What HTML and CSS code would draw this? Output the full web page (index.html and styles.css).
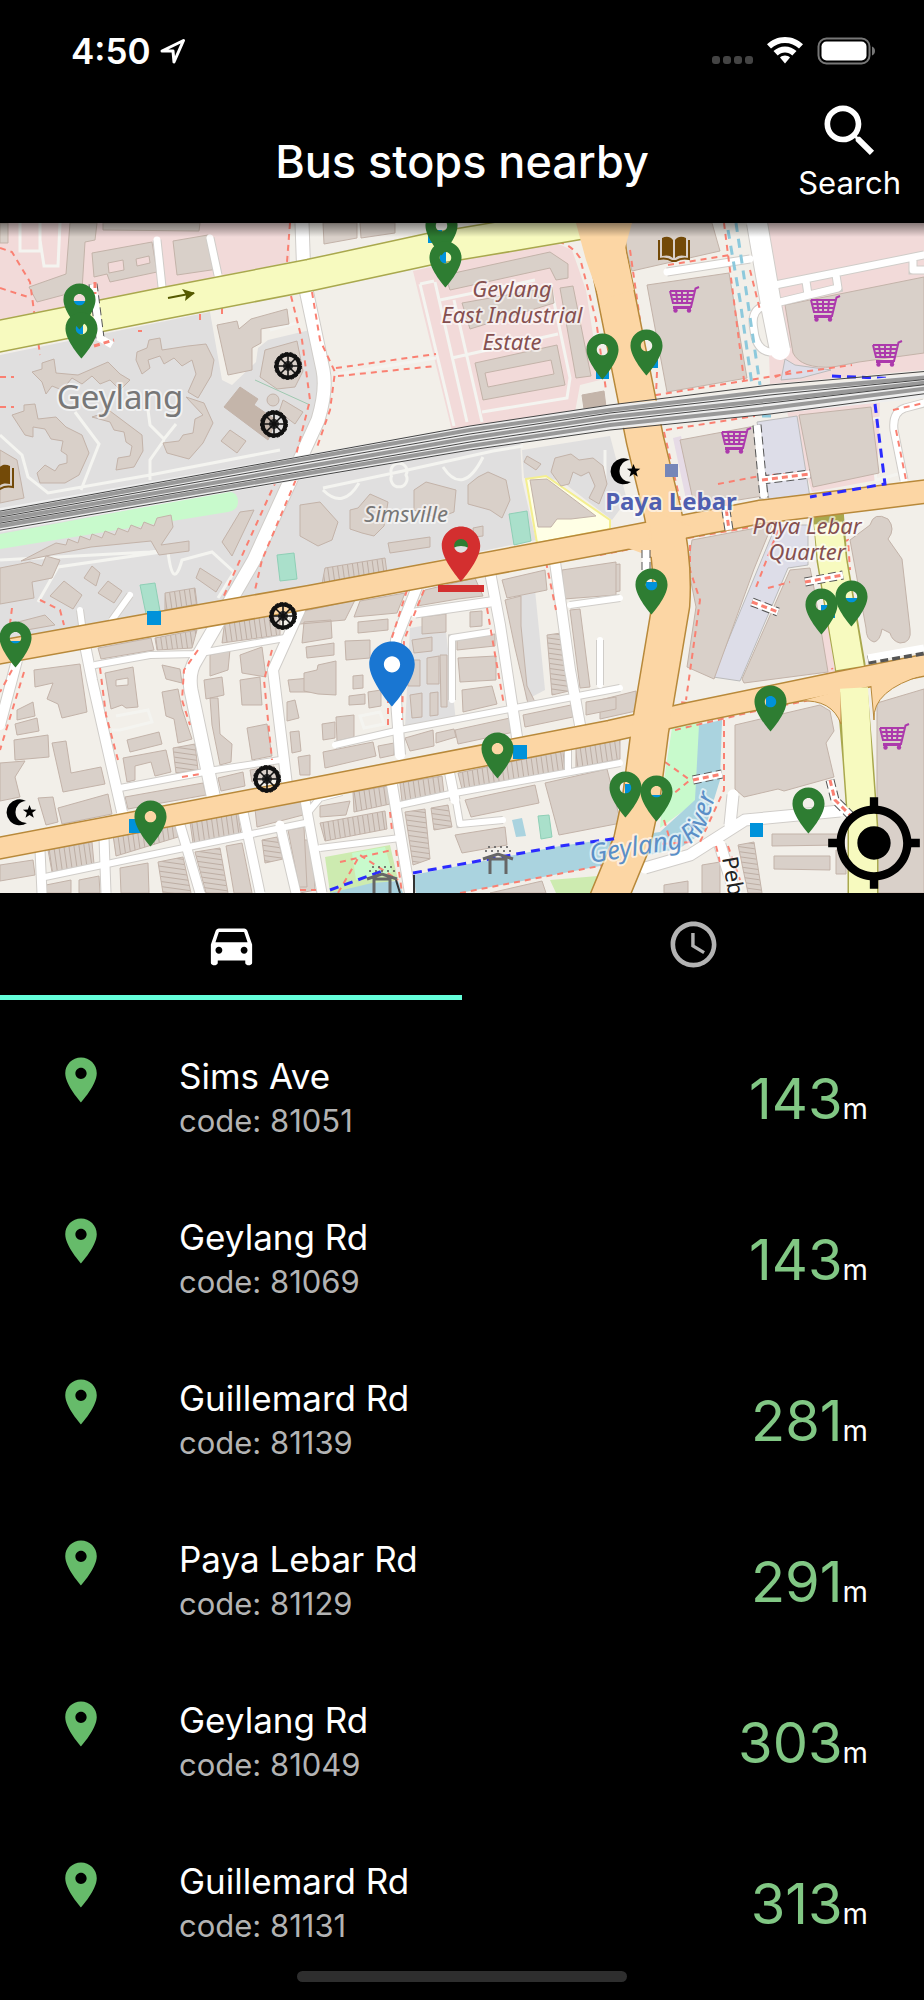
FILE: index.html
```html
<!DOCTYPE html>
<html lang="en">

<head>
    <meta charset="utf-8">
    <meta name="viewport" content="width=device-width, initial-scale=1">
    <title>Bus stops nearby</title>
    <link rel="stylesheet" href="styles.css">
</head>

<body>
<svg class="defs" width="0" height="0" aria-hidden="true">
    <symbol id="place" viewBox="0 0 24 24">
        <path d="M12 2C8.13 2 5 5.13 5 9c0 5.25 7 13 7 13s7-7.75 7-13c0-3.87-3.13-7-7-7zm0 9.5c-1.38 0-2.5-1.12-2.5-2.5s1.12-2.5 2.5-2.5 2.5 1.12 2.5 2.5-1.12 2.5-2.5 2.5z"/>
    </symbol>
</svg>

<header class="header">
    <div class="status">
        <span class="time">4:50</span>
        <svg class="arrow" viewBox="0 0 26 26"><path d="M2 13 23.5 2.5 14 24 13 13z"/></svg>
        <span class="dots"><i></i><i></i><i></i><i></i></span>
        <svg class="wifi" viewBox="0 0 36 27">
            <path d="M18 0C11 0 4.8 2.8 0 7.3l4 4.2C7.7 8 12.6 6 18 6s10.3 2 14 5.500l4-4.2C31.2 2.8 25 0 18 0z"/>
            <path d="M18 9.5c-4.4 0-8.4 1.7-11.5 4.6l4.2 4.3c2-1.8 4.5-2.9 7.3-2.9s5.3 1.1 7.3 2.9l4.2-4.3c-3.1-2.9-7.1-4.6-11.500-4.6z"/>
            <path d="M18 18.5c-1.9 0-3.6.7-5 1.9l5 6 5-6c-1.4-1.2-3.1-1.9-5-1.9z"/>
        </svg>
        <svg class="battery" viewBox="0 0 59 28">
            <rect x="1.5" y="1.5" width="51" height="25" rx="8" fill="none" stroke="#777" stroke-width="2"/>
            <rect x="4.5" y="4.5" width="45" height="19" rx="5" fill="#fff"/>
            <path d="M55 9.5c4 1 4 8 0 9z" fill="#777"/>
        </svg>
    </div>
    <div class="bar">
        <h1 class="title">Bus stops nearby</h1>
        <button class="search" type="button">
            <svg viewBox="0 0 24 24"><path d="M15.5 14h-.79l-.28-.27C15.41 12.59 16 11.11 16 9.5 16 5.91 13.09 3 9.5 3S3 5.91 3 9.5 5.91 16 9.5 16c1.61 0 3.09-.59 4.23-1.57l.27.28v.79l5 4.99L20.49 19l-4.99-5zm-6 0C7.01 14 5 11.99 5 9.5S7.01 5 9.5 5 14 7.01 14 9.5 11.99 14 9.5 14z"/></svg>
            <span>Search</span>
        </button>
    </div>
</header>

<section class="map">
    <svg class="tiles" viewBox="0 223 924 670" role="img" aria-label="Map of bus stops in Geylang">
        <defs>
            <pattern id="terrace" width="5" height="5" patternUnits="userSpaceOnUse" patternTransform="rotate(-8)">
                <rect width="5" height="5" fill="#d9d0c9"/><path d="M0 0V5" stroke="#bdaea4" stroke-width="2"/>
            </pattern>
            <pattern id="terrace-h" width="5" height="5" patternUnits="userSpaceOnUse" patternTransform="rotate(8)">
                <rect width="5" height="5" fill="#d9d0c9"/><path d="M0 0H5" stroke="#bdaea4" stroke-width="2"/>
            </pattern>
            <linearGradient id="shade" x1="0" y1="0" x2="0" y2="1">
                <stop offset="0" stop-color="#000" stop-opacity=".45"/><stop offset="1" stop-color="#000" stop-opacity="0"/>
            </linearGradient>
            <symbol id="cart" viewBox="0 0 31 27">
                <path d="M30 1l-3.5 1.5L22 21H5M1 5h24M1 5l3 12h19M3 9h21M4 13h19M7 5l1.5 12M13 5v12M19 5l-1 12" fill="none" stroke="#ac39ac" stroke-width="2"/>
                <path d="M4 20h18v3H4z" fill="#ac39ac"/>
                <circle cx="6.5" cy="24.5" r="2.2" fill="#ac39ac"/><circle cx="20" cy="24.5" r="2.2" fill="#ac39ac"/>
            </symbol>
            <symbol id="book" viewBox="0 0 32 27">
                <path d="M4 2c4-2 8-2 11 2v18c-3-3-7-3-11-2zM28 2c-4-2-8-2-11 2v18c3-3 7-3 11-2z" fill="#734a08"/>
                <path d="M1 4v19c5-1 10 0 13 2h4c3-2 8-3 13-2V4" fill="none" stroke="#734a08" stroke-width="2"/>
            </symbol>
            <symbol id="wheel" viewBox="0 0 30 30">
                <circle cx="15" cy="15" r="11.5" fill="none" stroke="#111" stroke-width="4"/>
                <circle cx="15" cy="15" r="13.500" fill="none" stroke="#111" stroke-width="1" stroke-dasharray="3 2"/>
                <circle cx="15" cy="15" r="5" fill="#333"/>
                <path d="M15 3v24M3 15h24M6.5 6.5l17 17M23.5 6.5l-17 17" stroke="#111" stroke-width="1.6"/>
            </symbol>
            <symbol id="moon" viewBox="0 0 32 28">
                <path d="M20 3a13 13 0 1 0 1 22a10 10 0 1 1-1-22z"/>
                <path d="M23.5 7l1.8 4.6 5 .2-4 3 1.5 4.9-4.3-2.8-4 2.8 1.4-4.9-4-3 4.9-.2z"/>
            </symbol>
            <symbol id="shelter" viewBox="0 0 32 28">
                <path d="M1 13 16 8l15 5M8 11v17M24 11v17M8 13h16" fill="none" stroke="#666" stroke-width="3"/>
                <path d="M3 5h26M6 1h20" stroke="#555" stroke-width="1.5" stroke-dasharray="2 4"/>
            </symbol>
            <path id="river-line" d="M591 863 682 848Q702 840 708 820L732 745"/>
        </defs>

        <!-- land use -->
        <rect x="0" y="223" width="924" height="670" fill="#f2efe9"/>
        <g class="residential">
            <path d="M0 355 210 312 222 380 232 385 256 362 258 348 268 340 310 330 325 380 300 462 0 518z"/>
            <path d="M0 525 300 470 520 436 522 480 536 540 380 572 300 590 0 640z"/>
            <path d="M522 450 610 436 627 500 612 520 560 480 524 478z"/>
            <path d="M410 628 445 622 456 722 405 728z"/>
            <path d="M515 596 535 590 545 690 526 700z"/>
        </g>
        <g class="commercial">
            <path d="M0 223H290V262L0 320z"/>
            <path d="M413 271 550 240 572 250 586 290 600 380 580 385 575 412 452 431z"/>
            <path d="M765 223H924V370L770 384z"/>
            <path d="M787 412 880 402 877 480 812 492z"/>
            <path d="M820 620 838 620 836 672 826 674z"/>
        </g>
        <path class="grass" d="M0 534 225 492Q238 490 238 502 238 510 228 512L0 549z"/>
        <path class="grass" d="M672 728 700 722 698 800 660 828 664 780z"/>
        <path fill="#cdebb0" d="M325 857 390 845 398 880 330 893zM550 880 610 875 600 893H556z"/>
        <path class="grass" d="M352 853 385 847 392 872 356 880z"/>
        <path class="water" d="M413 875 560 846 660 832 695 800 699 725 722 720 720 780 704 832 680 848 600 866 460 893H416zM330 893 372 883 398 881 403 893zM512 820l10-2 4 18-10 1z"/>
        <path class="pitch" d="M140 585l15-2 5 28-14 3zM277 555l17-2 3 26-17 2zM509 514l18-3 4 30-17 4zM538 816l11-1 3 22-11 2z"/>
        <path fill="#dddde8" stroke="#bbb" d="M757 422l40-6 14 88-40 8zM785 359l10 6 36 5-30 8-20 2zM776 525h32v26l0 14-20 3-48 113-27-4z"/>
        <path fill="#e6dbe6" d="M673 438l8-2 14 66-8 2z"/>
        <path fill="#ffffe5" stroke="#f4ef90" stroke-width="2" d="M526 479l20-3 64 44v9l-73 14z"/>

        <!-- service lanes -->
        <g class="lane">
            <path d="M20 223v28h20V223M40 240l4 26h14L60 223"/>
            <path d="M420 284l34 142M435 282l32 140M420 284l14-3M454 300l28 122M440 300l95-20M452 358l106-24M482 412l85-14 3-20-20-95"/>
            <path d="M338 374 436 358M75 412l24 32-18 46M148 410l2 15 14 14 12-15M150 480v-20l14-20M0 435l22 20 6 22 20 16 102-18 130-25"/>
            <path d="M323 488l80-17 90-20 30-5M323 490q20 20 36-7M443 467q20 30 40-10M392 475a8 8 0 1 0 14 0 8 8 0 1 0-14 0"/>
            <path d="M0 560 150 552 186 548M38 602l20-35 110-16M168 552q5 40 14 8l30-8 22 20-16 26M116 716l32-6 4 12-32 8-8 0"/>
            <path d="M270 330l30-8M605 450v35l-6 14M870 418l6 62 22-6M868 420l12-2M360 716l20-4 4 12-20 4z"/>
        </g>
        <path fill="none" stroke="#9ec9b0" d="M255 380 310 405"/>

        <!-- buildings -->
        <g class="building">
            <path d="M70 223H97L95 240 85 242 82 290 37 302 29 287 66 274zM173 241l35-6 10 34-41 6zM103 223h97l-1 8-96-1zM0 223h8v20H0z"/>
            <path fill-rule="evenodd" d="M92 253l60-11 5 30-47 10-3-8-13 3zM108 263l15-3 1 10-15 3zM136 259l13-3 1 7-13 3z"/>
            <path d="M32 372l10-3 0-6 12-4 2 14 22 2 30-13 12 12 10 6-10 10-10-10-10 4-8-8-10 8-10-6-10 12-10-4-6 8-4-12z"/>
            <path d="M137 352l10-4 2-8 11-2 2 12 26-4 18-2 8 16-3 16-13 22-10-6 8-18-4-14-10 6-8-8-10 6-4-8-12 4 2 8-8 6-6-14z"/>
            <path d="M12 415l12-4 0-6 11-1 3 15 18-2 10 10 16 8 7 18-10 22-14 8-25 0-3-10 8-8 10 6 4-6 8-2 0-8-6-4 2-10-12-2-6-10-12-2 0 10-8-2z"/>
            <path d="M92 417l18-6 32 24 1 16-9 16-18 3 2-12 12-2 2-10-6-4-2-10-10-2-4-8zM186 397l18 6 9 20-10 20-14 16-22-6-4-10 16-2 4-6 10-2 2-14 8-4z"/>
            <path d="M217 325l20-4 2 8 12-10 36-10 2 15-28 5v14l-9 5v22l-24 5zM265 350l32-9 6 30-8 16-18 2-17-12zM230 430l16 11-9 12-16-12zM283 400l20 12-8 12-16-12zM0 450l17 10 7 38-24 5zM267 400a6 6 0 1 0 12 0 6 6 0 1 0-12 0"/>
            <path d="M48 547l8-4 10 2 2-6 10 4 2-7 10 4 2-6 10 4 3-7 10 4 3-7 10 4 3-7 10 4 3-7 10 4 3-8 14-3 2 12-12 18 28-4v10l-30 4-8-14-60 6-70 14zM240 512l14-2-22 46-10-14z"/>
            <path d="M0 568l30-6 12 4 4-10 14 4-8 18-20 4 2 16-34 6zM50 596l14-15 18 14-9 14zM84 578l8-12 8 7-4 13zM98 593l10-12 14 10-8 12zM18 622l27-7 10 10-34 6zM200 568l22 14-6 10-20-14z"/>
            <path d="M300 505l20-3 18 20-6 18-14 6-18-10zM350 510l8-2 12-14 18 8-4 24-10 10-12-3-12-4zM414 490l12-8 30 8-2 22-16 6-24-8zM468 485l10-8 10-5 18 8 4 20-8 18-12-8-22-6zM388 543l42-6v10l-40 6zM473 528l10-2v10l-9 1zM555 458l16-4 8 6 14-2 10 8 4 18-8 20-10-6 6-12-6-14-8 4-8-4-4 12-8 2-10-14zM527 456l14 8-5 6-12-8zM530 480l17-1 49 37-25 3-14 0-6 8-13 0z"/>
            <path d="M323 223h34v15l-33 6zM360 223h35v10l-34 5zM445 275l105-23 18 12v14l-12 2-6-12-100 22zM462 303l90-16 2 16-84 26zM560 288l13-2 18 90-15 2z"/>
            <path fill-rule="evenodd" d="M475 363l82-18 8 40-82 15zM485 373l66-13 3 14-66 13zM105 673l28-6 5 40-12 1-4-3-11 4zM116 680l12-2v7l-12 1z"/>
            <path d="M630 223h82l8 28-88 20-7-26zM647 285l82-12 18 105-80 14zM785 305l139-28v76l-65 9-26 5q-32 2-40-14zM680 440l75-14 8 70-62 10-8-6zM799 415l72-8 8 66-66 14z"/>
            <path d="M692 540l80-15-18 44-40 110-27-12 9-60-8-40zM790 570l20-2 4 20 14 84-84 11-2-4zM850 540l20-15q4-14 18-6 8 10 0 20l14 20 8 70q2 14-10 14-8-2-10-10l-8-4q-2 12-8 13-8-2-8-14z"/>
            <path d="M735 725l85-20 10 6 4 20-8 12 8 34-50 14-6-2-34 8-9-8zM877 703l47-14V893h-47z"/>
            <path d="M600 566l20-2v27l-20 3zM600 700l36-9 0 20-36 8zM772 834h68v11l-68 1zM774 856h56v14l-56-1zM836 850h10v24h-10zM702 865l18-3v31h-18zM664 885l24-4v12h-24zM545 783l62-14 14 54-62 12z"/>
            <path d="M98 648l53-10 3 12-53 9zM34 670l46-6 7 48-25 6-4-14-11-5 6-16-18 4zM17 710l16-8 2 14-18 4zM15 724l22-6 2 13-22 4zM14 740l34-5 1 22-34 3zM52 743l14-2 5 32 30-6 4 17-42 8zM0 763l25-2-10 16 5 20-20 4zM38 798l15-1 5 25-12 3zM58 808l50-14 4 20-50 10z"/>
            <path d="M127 740l32-8 3 12-32 8zM123 758l43-8 5 22-16 4-4-14-16 4v14l-8 2zM125 797l78-14 3 12-78 14zM162 665l18 4 2 14-16-4zM162 692l16-3 4 20 10 30-14 4-4-24-8-3z"/>
            <path d="M210 655l20-5-2 20-18 6zM204 680l18-3 2 18-18 4zM210 698l8 0 2 36 12 10-1 18-11 3-8-40zM240 655l22-8 4 30-24-4zM240 680l20-3 2 28-20 0zM247 728l20-4 5 32-20 4zM218 778l25-6 2 14-24 5zM250 770l24-4 2 12-24 4zM288 680l22-2v14l-20 0zM287 702l8-2 4 18-12 3zM290 732l9-1 2 20-9 2zM298 757l12-2v20h-10z"/>
            <path d="M300 612l55-12-10 20-45 4zM360 601l45-8-8 20-43 4zM358 622l30-3v11l-30 3zM304 622l27-2 1 18-30 5zM306 647l28-4v12l-27 3zM345 641l25-1v18l-24 2zM318 665l18-4v34l-18-1-14-3v-18l13-3zM353 676l10-1v13l-10 1zM349 696l16-2v10l-16 1zM368 692l13-2v16l-12 2zM336 717l18-2v22l-17 4zM322 724l13-2v16l-12 2z"/>
            <path d="M323 752l50-10 3 14-51 12zM378 746l16-3v12l-14 3zM405 738l28-8 1 16-24 5zM436 733l18-4 2 8-20 6zM455 730l55-12 4 14-56 12zM412 640l20-3v14l-18 2zM427 658l12-2v28h-12zM410 695l12-2v24l-10 1zM430 693l8-1v23l-8 1zM440 655h7v52h-6zM408 660h12v26h-12zM422 617l24-3v18l-24 2zM470 612l12-1v15l-12 1zM457 640l38-6v12l-38 4zM458 658l38-2v24l-36 2zM462 690l30-4 5 18-34 8zM425 590l50-12 8 18-25 3-41 7z"/>
            <path d="M502 580l43-10 2 20-40 8zM505 600l16-4v30l6 60 10 20-8 2-14-60zM562 570l54-8v33l-52 4zM570 610l10-1 10 78-10 1zM523 715l48-10 2 12-48 10zM586 702l30-5v12l-30 6zM465 800l70-15 4 18-68 14zM320 806l30-5-4 14-26 2zM455 835l50-8 2 18-45 8zM490 893l52-12 4 12zM300 840l12 0 3 50-15 3z"/>
            <path d="M255 809l46-10 2 16-46 12zM0 865l33-5 2 15-35 6zM46 885l25-5v13H46zM79 880l20-4 1 17H79zM120 868l28-5 1 30h-28zM226 846l16-3 10 50h-18zM288 830l16-3 3 60h-8z"/>
        </g>
        <g class="building dark">
            <path d="M240 387l18 12-4 6 22 15-8 20-44-33zM582 395l22-4 2 16-22 2z"/>
        </g>
        <g class="hatched">
            <path d="M165 593l30-5 2 16-32 6zM155 638l42-8-5 18-35 2zM225 620l55-10v25l-58 8zM48 850l44-8 2 22-42 8zM113 835l64-12 1 14-62 19zM190 822l48-9 3 22-48 8zM325 568l60-10 2 15-65 11zM458 773l105-22 2 20-103 18zM576 748l44-9v20l-44 9zM400 783l42-7 2 18-42 7zM353 792l35-6 2 18-36 8zM320 823l65-12 2 18-62 12z"/>
        </g>
        <g class="hatched across">
            <path d="M173 748l22-4 3 26-22 3zM158 862l25-5 8 36h-28zM195 852l25-4 8 45h-22zM262 840l15-3 6 22-18 4zM405 812l20-3 5 50-17 6zM431 808l17-3 4 22-18 3zM547 635l14-2 8 58-17 4zM738 845l16-3 8 51h-14z"/>
        </g>

        <!-- side streets: casing first, then the fill -->
        <g class="street-case">
            <path stroke-width="15" d="M302 223 304 280 323 370Q327 390 318 420L254 560 196 660Q188 672 191 690L213 795"/>
            <path stroke-width="12" d="M300 610 273 670 287 785M85 645 92 680 122 812M17 660 0 725M417 587 396 640V700L400 755M392 785 410 893M490 572 500 625 517 737M555 562 570 670 580 725"/>
            <path stroke-width="11" d="M40 850 42 893M104 838 106 893M180 825 200 893M243 812 260 893M280 825 296 893M305 800 322 893M449 770 455 800M415 613 490 602"/>
            <path stroke-width="8" d="M95 665 150 655 195 654 285 638M45 877 150 855 310 822M120 788 215 770 280 760M335 745 400 730 620 688M400 805 455 793 620 763M320 848 400 838M452 700 452 638 490 632M455 795 460 824 503 820M568 772V750M570 605 620 598M600 640V685M80 610 84 640M112 620 130 595M310 810 320 798 342 792"/>
            <path stroke-width="13" d="M645 868 690 855 745 820 840 811M720 845 735 893M733 795 730 825"/>
            <path stroke-width="22" d="M757 223 772 310 780 350"/>
            <path stroke-width="9" d="M667 272 750 259M775 285 924 255M780 302 838 288 836 275M806 281 808 295M904 480 894 430Q892 412 905 408L924 403M157 240 162 287M210 238 218 275M764 306Q750 310 754 330 756 350 770 352M913 260V270H924"/>
        </g>
        <g class="street">
            <path stroke-width="13" d="M302 223 304 280 323 370Q327 390 318 420L254 560 196 660Q188 672 191 690L213 795"/>
            <path stroke-width="10" d="M300 610 273 670 287 785M85 645 92 680 122 812M17 660 0 725M417 587 396 640V700L400 755M392 785 410 893M490 572 500 625 517 737M555 562 570 670 580 725"/>
            <path stroke-width="9" d="M40 850 42 893M104 838 106 893M180 825 200 893M243 812 260 893M280 825 296 893M305 800 322 893M449 770 455 800M415 613 490 602"/>
            <path stroke-width="6" d="M95 665 150 655 195 654 285 638M45 877 150 855 310 822M120 788 215 770 280 760M335 745 400 730 620 688M400 805 455 793 620 763M320 848 400 838M452 700 452 638 490 632M455 795 460 824 503 820M568 772V750M570 605 620 598M600 640V685M80 610 84 640M112 620 130 595M310 810 320 798 342 792"/>
            <path stroke-width="11" d="M645 868 690 855 745 820 840 811M720 845 735 893M733 795 730 825"/>
            <path stroke-width="20" d="M757 223 772 310 780 350"/>
            <path stroke-width="7" d="M667 272 750 259M775 285 924 255M780 302 838 288 836 275M806 281 808 295M904 480 894 430Q892 412 905 408L924 403M157 240 162 287M210 238 218 275M764 306Q750 310 754 330 756 350 770 352M913 260V270H924"/>
        </g>
        <path fill="none" stroke="#8dc9dc" stroke-width="3" stroke-dasharray="9 7" d="M736 223 746 290 760 385M728 230 740 300 752 385M762 416h12"/>

        <!-- footways -->
        <g class="foot">
            <path d="M0 248 12 252 30 282 40 355M0 288 28 297M290 223 287 262M291 296 302 340 310 400 296 455M312 292 320 340 335 372 330 410 316 450M336 368 436 354M338 376 436 366M395 263 550 240Q570 242 580 258L596 320 606 390"/>
            <path d="M281 470 240 560 222 600M300 470 262 560 255 590M198 650 184 670 182 700 190 725M272 650 264 680 268 720 272 760M100 668 106 715 118 760M25 658 64 650M12 670 0 692M24 672 0 750M40 600 60 610 64 625M12 608 8 640M138 331h4M200 314v6M222 308v6M0 377h14M0 407h14"/>
            <path d="M407 590 388 650 388 725M424 590 404 640 402 720M487 608 496 660 504 705M546 562 556 610M606 553 700 535M390 812 392 830M182 777 200 774M250 809 306 798"/>
            <path d="M724 223 744 380M630 250 640 320M657 372 656 395 780 375 852 365M668 265 730 255M750 270 760 310M718 484 760 476 810 472M664 432 680 500M666 430 755 416M690 545 690 570 700 600 686 700M778 530 755 590M720 706 678 702M688 538 780 522M675 730 760 710 820 698M724 720 724 790 700 842M665 762 690 780 672 795M768 588 790 582M832 545 848 540 850 570M840 690 832 668M893 410 924 403M896 430 906 480M840 508 924 498M600 555 650 545M775 377l20-8M664 820 670 840M716 846 720 862M728 846 740 880"/>
            <path d="M460 893 620 862M338 893 360 855 398 880M340 862 392 850M300 890H316M396 850 402 893M690 842 660 844"/>
        </g>

        <!-- main roads -->
        <g class="road-case yellow-case">
            <path stroke-width="33" d="M-5 337 155 305 310 275 430 249 520 234 590 222"/>
            <path stroke-width="31" d="M828 510 832 560 850 665 858 760 863 830V893"/>
        </g>
        <g class="road-case orange-case">
            <path stroke-width="25" d="M-5 653 150 625 310 597 460 569 610 541 760 512 930 491"/>
            <path stroke-width="23" d="M-5 849 310 789 610 731 690 713 840 682 930 664"/>
            <path stroke-width="39" d="M603 210 608 255 626 345 645 440 662 510Q674 560 671 605L650 730 641 800 632 842 606 905"/>
        </g>
        <path class="corner" d="M800 701Q832 699 841 724V690zM874 720Q872 690 924 675V664L870 676z"/>
        <g class="road yellow">
            <path stroke-width="30" d="M-5 337 155 305 310 275 430 249 520 234 590 222"/>
        </g>
        <g class="road orange">
            <path stroke-width="22" d="M-5 653 150 625 310 597 460 569 610 541 760 512 930 491"/>
            <path stroke-width="20" d="M-5 849 310 789 610 731 690 713 840 682 930 664"/>
            <path stroke-width="36" d="M603 210 608 255 626 345 645 440 662 510Q674 560 671 605L650 730 641 800 632 842 606 905"/>
        </g>
        <path fill="#fcd6a4" d="M576 223H632L625 248 634 290 600 300 586 260zM620 545 652 540 648 508 690 526 692 532 660 560z"/>
        <path class="road yellow" stroke-width="28" d="M828 523 832 560 850 668M854 688 858 760 863 830V893"/>
        <path fill="none" stroke="#555900" stroke-width="2" d="M168 298 194 293"/>
        <path fill="#555900" d="M182 289l13 4-10 8 1-6z"/>
        <path fill="none" stroke="#555" stroke-width="9" stroke-dasharray="8 4" d="M93 284 100 338M752 602 778 612M805 582 843 575M693 780 722 774M724 498 729 530M830 780 835 800 855 820M646 550V570M757 425 764 498M762 480 810 474M868 660 924 651"/>
        <path fill="none" stroke="#fff" stroke-width="7" d="M93 284 100 338 112 345M752 602 778 612M805 582 843 575M693 780 722 774M724 498 729 530M830 780 835 800 855 820M646 550V570M757 425 764 498M762 480 810 474M868 658 924 648"/>
        <path fill="none" stroke="#fa8072" stroke-width="3" stroke-dasharray="6 4" d="M95 282v12M94 346 114 340M752 602 778 612M805 582 843 575M693 780 722 774M725 500 729 530M830 780 835 800 855 820M762 480 810 474"/>
        <path fill="none" stroke="#2b2bff" stroke-width="3" stroke-dasharray="9 6" d="M413 873 560 846 620 838M875 404 885 484 810 497M330 890 385 870M832 376 924 380"/>
        <path fill="none" stroke="#333" stroke-width="2" d="M414 875v18M396 880l4 13"/>

        <!-- railway -->
        <g class="rail">
            <path class="rail-bed" d="M-5 521 310 466 470 438 610 417 770 402 930 385"/>
            <path class="rail-line" d="M-5 515 310 458 470 430 610 410 770 391 930 377"/>
            <path class="rail-line" d="M-5 521 310 466 470 438 610 417 770 400 930 382"/>
            <path class="rail-line" d="M-5 527 310 473 470 446 610 425 770 408 930 388"/>
            <path class="rail-dark" d="M-5 512 310 455 470 426 610 405 770 385 930 371M-5 518 310 462 470 434 610 413 770 395 930 379M-5 524 310 470 470 442 610 421 770 403 930 384M-5 531 310 477 470 450 610 430 770 414 930 393"/>
        </g>

        <!-- points of interest -->
        <use href="#book" x="658" y="236" width="32" height="27"/>
        <use href="#book" x="-18" y="464" width="32" height="27"/>
        <use href="#cart" x="669" y="286" width="31" height="27"/>
        <use href="#cart" x="810" y="295" width="31" height="27"/>
        <use href="#cart" x="872" y="340" width="31" height="27"/>
        <use href="#cart" x="721" y="427" width="31" height="27"/>
        <use href="#cart" x="879" y="723" width="31" height="27"/>
        <use href="#wheel" x="273" y="351" width="30" height="30"/>
        <use href="#wheel" x="259" y="409" width="30" height="30"/>
        <use href="#wheel" x="268" y="601" width="30" height="30"/>
        <use href="#wheel" x="252" y="764" width="30" height="30"/>
        <use href="#moon" x="610" y="457" width="32" height="28"/>
        <use href="#moon" x="6" y="798" width="32" height="28"/>
        <use href="#shelter" x="482" y="846" width="32" height="28"/>
        <use href="#shelter" x="366" y="866" width="32" height="28"/>
        <rect x="665" y="464" width="13" height="13" fill="#7586b8"/>
        <path fill="#0092da" d="M147 611h14v14h-14zM129 819h14v14h-14zM513 745h14v14h-14zM750 823h13v14h-13zM428 230h14v13h-14zM596 366h13v13h-13zM645 355h13v13h-13zM73 301h13v14H73zM75 324h8v10h-8zM440 250h6v13h-6zM8 641h14v14H8zM646 582h12v13h-12zM821 605h14v13h-14zM844 598h14v13h-14zM766 696h11v12h-11zM625 784h10v12h-10zM650 795h13v13h-13z"/>

        <g class="label">
            <text class="suburb" x="120" y="409">Geylang</text>
            <text class="district" x="512" y="297">Geylang</text>
            <text class="district" x="512" y="323">East Industrial</text>
            <text class="district" x="512" y="350">Estate</text>
            <text class="estate" x="406" y="522">Simsville</text>
            <text class="station" x="671" y="510">Paya Lebar</text>
            <text class="district" x="807" y="534">Paya Lebar</text>
            <text class="district" x="807" y="560">Quarter</text>
            <text class="river"><textPath href="#river-line">Geylang River</textPath></text>
            <text class="street-name" transform="translate(722 858) rotate(80)">Peb</text>
        </g>

        <!-- bus stops -->
        <g class="stop">
            <use href="#place" x="52" y="279" width="55" height="55"/>
            <use href="#place" x="54" y="308" width="55" height="55"/>
            <use href="#place" x="414" y="205" width="55" height="55"/>
            <use href="#place" x="418" y="237" width="55" height="55"/>
            <use href="#place" x="575" y="329" width="55" height="55"/>
            <use href="#place" x="619" y="325" width="55" height="55"/>
            <use href="#place" x="-12" y="617" width="55" height="55"/>
            <use href="#place" x="123" y="796" width="55" height="55"/>
            <use href="#place" x="470" y="728" width="55" height="55"/>
            <use href="#place" x="624" y="564" width="55" height="55"/>
            <use href="#place" x="794" y="584" width="55" height="55"/>
            <use href="#place" x="824" y="576" width="55" height="55"/>
            <use href="#place" x="743" y="681" width="55" height="55"/>
            <use href="#place" x="598" y="767" width="55" height="55"/>
            <use href="#place" x="629" y="771" width="55" height="55"/>
            <use href="#place" x="781" y="783" width="55" height="55"/>
        </g>
        <path fill="#2e7d32" d="M453 538h16v10q-8-4-16 0z"/>
        <use href="#place" x="428" y="521" width="66" height="66" fill="#d32f2f"/>
        <rect x="438" y="585" width="46" height="7" fill="#d32f2f"/>
        <circle cx="392" cy="664" r="9" fill="#fff"/>
        <use href="#place" x="353" y="635" width="78" height="78" fill="#1976d2"/>
        <rect x="0" y="223" width="924" height="14" fill="url(#shade)"/>
    </svg>
    <button class="locate" type="button" aria-label="My location">
        <svg viewBox="0 0 24 24"><path d="M12 8c-2.21 0-4 1.79-4 4s1.79 4 4 4 4-1.79 4-4-1.79-4-4-4zm8.94 3c-.46-4.17-3.77-7.48-7.94-7.94V1h-2v2.06C6.83 3.52 3.52 6.83 3.06 11H1v2h2.06c.46 4.17 3.77 7.48 7.94 7.94V23h2v-2.06c4.17-.46 7.48-3.77 7.94-7.94H23v-2h-2.06zM12 19c-3.87 0-7-3.13-7-7s3.13-7 7-7 7 3.13 7 7-3.13 7-7 7z"/></svg>
    </button>
</section>

<nav class="tabs" role="tablist">
    <button class="tab active" type="button" role="tab" aria-selected="true" aria-label="Nearby">
        <svg viewBox="0 0 24 24"><path d="M18.92 6.01C18.72 5.42 18.16 5 17.5 5h-11c-.66 0-1.21.42-1.42 1.01L3 12v8c0 .55.45 1 1 1h1c.55 0 1-.45 1-1v-1h12v1c0 .55.45 1 1 1h1c.55 0 1-.45 1-1v-8l-2.08-5.99zM6.5 16c-.83 0-1.5-.67-1.5-1.5S5.67 13 6.5 13s1.5.67 1.5 1.5S7.33 16 6.5 16zm11 0c-.83 0-1.5-.67-1.5-1.5s.67-1.5 1.5-1.5 1.5.67 1.5 1.5-.67 1.5-1.5 1.5zM5 11l1.5-4.5h11L19 11H5z"/></svg>
    </button>
    <button class="tab" type="button" role="tab" aria-selected="false" aria-label="Recent">
        <svg viewBox="0 0 24 24"><path d="M11.99 2C6.47 2 2 6.48 2 12s4.47 10 9.99 10C17.52 22 22 17.52 22 12S17.52 2 11.99 2zM12 20c-4.42 0-8-3.58-8-8s3.58-8 8-8 8 3.58 8 8-3.58 8-8 8zm.5-13H11v6l5.25 3.15.75-1.23-4.5-2.67z"/></svg>
    </button>
</nav>

<ul class="stops">
    <li class="item">
        <svg class="pin"><use href="#place"/></svg>
        <div class="info"><p class="name">Sims Ave</p><p class="code">code: 81051</p></div>
        <div class="distance">143<span>m</span></div>
    </li>
    <li class="item">
        <svg class="pin"><use href="#place"/></svg>
        <div class="info"><p class="name">Geylang Rd</p><p class="code">code: 81069</p></div>
        <div class="distance">143<span>m</span></div>
    </li>
    <li class="item">
        <svg class="pin"><use href="#place"/></svg>
        <div class="info"><p class="name">Guillemard Rd</p><p class="code">code: 81139</p></div>
        <div class="distance">281<span>m</span></div>
    </li>
    <li class="item">
        <svg class="pin"><use href="#place"/></svg>
        <div class="info"><p class="name">Paya Lebar Rd</p><p class="code">code: 81129</p></div>
        <div class="distance">291<span>m</span></div>
    </li>
    <li class="item">
        <svg class="pin"><use href="#place"/></svg>
        <div class="info"><p class="name">Geylang Rd</p><p class="code">code: 81049</p></div>
        <div class="distance">303<span>m</span></div>
    </li>
    <li class="item">
        <svg class="pin"><use href="#place"/></svg>
        <div class="info"><p class="name">Guillemard Rd</p><p class="code">code: 81131</p></div>
        <div class="distance">313<span>m</span></div>
    </li>
</ul>
<div class="home"></div>
</body>

</html>
```
FILE: styles.css
```css
* {
    margin: 0;
    padding: 0;
    box-sizing: border-box;
}
body {
    background: #000;
    color: #fff;
    font-family: Inter, "Liberation Sans", sans-serif;
}
button {
    background: none;
    border: 0;
    color: inherit;
    font: inherit;
    cursor: pointer;
}
svg {
    display: block;
}
.defs {
    position: absolute;
}

/* header */
.status {
    display: flex;
    align-items: center;
    height: 101px;
    padding: 0 48px 0 71px;
}
.time {
    font-size: 35px;
    font-weight: 600;
}
.arrow {
    width: 26px;
    height: 26px;
    margin-left: 9px;
    fill: none;
    stroke: #fff;
    stroke-width: 3;
    stroke-linejoin: round;
}
.dots {
    display: flex;
    gap: 3px;
    margin-left: auto;
    padding-top: 18px;
}
.dots i {
    width: 8px;
    height: 8px;
    border-radius: 3px;
    background: #444;
}
.wifi {
    width: 36px;
    height: 27px;
    margin-left: 14px;
    fill: #fff;
}
.battery {
    width: 59px;
    height: 28px;
    margin-left: 14px;
}
.bar {
    display: grid;
    grid-template-columns: 1fr auto 1fr;
    align-items: center;
    height: 122px;
    padding: 0 23px;
}
.title {
    grid-column: 2;
    font-size: 45px;
    font-weight: 500;
    line-height: 56px;
}
.search {
    align-self: start;
    justify-self: end;
    font-size: 31px;
    line-height: 36px;
}
.search svg {
    width: 68px;
    height: 68px;
    margin: -4px auto 0;
    fill: #fff;
}

/* map */
.map {
    position: relative;
    overflow: hidden;
}
.tiles {
    width: 100%;
    height: auto;
}
.residential {
    fill: #e0dfdf;
}
.commercial {
    fill: #f2dad9;
}
.grass {
    fill: #c8facc;
}
.water {
    fill: #aad3df;
}
.pitch {
    fill: #aae0cb;
    stroke: #8fcfb6;
}
.building {
    fill: #d9d0c9;
    stroke: #c3b3a9;
    stroke-width: 1;
}
.dark {
    fill: #c4b5aa;
}
.hatched {
    fill: url(#terrace);
    stroke: #c3b3a9;
}
.across {
    fill: url(#terrace-h);
}
.lane {
    fill: none;
    stroke: #f4f4f0;
    stroke-width: 3;
}
.street-case {
    fill: none;
    stroke: #d0cdc9;
}
.street {
    fill: none;
    stroke: #fff;
    stroke-linejoin: round;
    stroke-linecap: round;
}
.foot {
    fill: none;
    stroke: #fa8072;
    stroke-width: 2;
    stroke-dasharray: 6 5;
}
.road,
.road-case {
    fill: none;
    stroke-linejoin: round;
}
.yellow {
    stroke: #f7fabf;
}
.yellow-case {
    stroke: #a9a84d;
}
.orange {
    stroke: #fcd6a4;
}
.orange-case {
    stroke: #b8893a;
}
.corner {
    fill: #fcd6a4;
    stroke: #b8893a;
}
.rail {
    fill: none;
}
.rail-bed {
    stroke: #eee;
    stroke-width: 24;
}
.rail-line {
    stroke: #999;
    stroke-width: 4;
}
.rail-dark {
    stroke: #444;
    stroke-width: 1;
}
.label {
    font-family: "Noto Sans", sans-serif;
    font-size: 22px;
    text-anchor: middle;
    paint-order: stroke;
    stroke: rgba(255, 255, 255, .6);
    stroke-width: 4px;
    stroke-linejoin: round;
}
.suburb {
    font-size: 33px;
    fill: #777;
}
.district {
    font-style: italic;
    fill: #855050;
}
.estate {
    font-style: italic;
    fill: #777;
}
.station {
    font-size: 24px;
    font-weight: 700;
    fill: #4f5fb0;
}
.river {
    font-size: 26px;
    font-style: italic;
    text-anchor: start;
    fill: #5b8fc7;
}
.street-name {
    text-anchor: start;
    fill: #222;
}
.stop {
    fill: #2e7d32;
}
.locate {
    position: absolute;
    right: 0;
    bottom: 0;
    width: 100px;
    height: 100px;
}

/* tabs */
.tabs {
    display: flex;
}
.tab {
    display: flex;
    flex: 1;
    justify-content: center;
    height: 107px;
    padding-top: 24px;
    color: #b3b3b3;
    border-bottom: 5px solid transparent;
}
.tab svg {
    width: 55px;
    height: 55px;
    fill: currentColor;
}
.active {
    color: #fff;
    border-color: #64ffda;
}

/* stops list */
.stops {
    padding-top: 17px;
    list-style: none;
}
.item {
    display: flex;
    align-items: center;
    height: 161px;
    padding: 0 56px 0 54px;
}
.pin {
    width: 54px;
    height: 54px;
    margin: 0 71px 36px 0;
    fill: #66bb6a;
}
.info {
    flex: 1;
}
.name {
    font-size: 35px;
    line-height: 46px;
}
.code {
    color: #b3b3b3;
    font-size: 31px;
    line-height: 44px;
}
.distance {
    padding-top: 12px;
    color: #81c784;
    font-size: 56px;
    line-height: 66px;
}
.distance span {
    color: #fff;
    font-size: 29px;
}
.home {
    position: fixed;
    bottom: 18px;
    left: 50%;
    width: 330px;
    height: 11px;
    margin-left: -165px;
    border-radius: 6px;
    background: #2e2e2e;
}
```
